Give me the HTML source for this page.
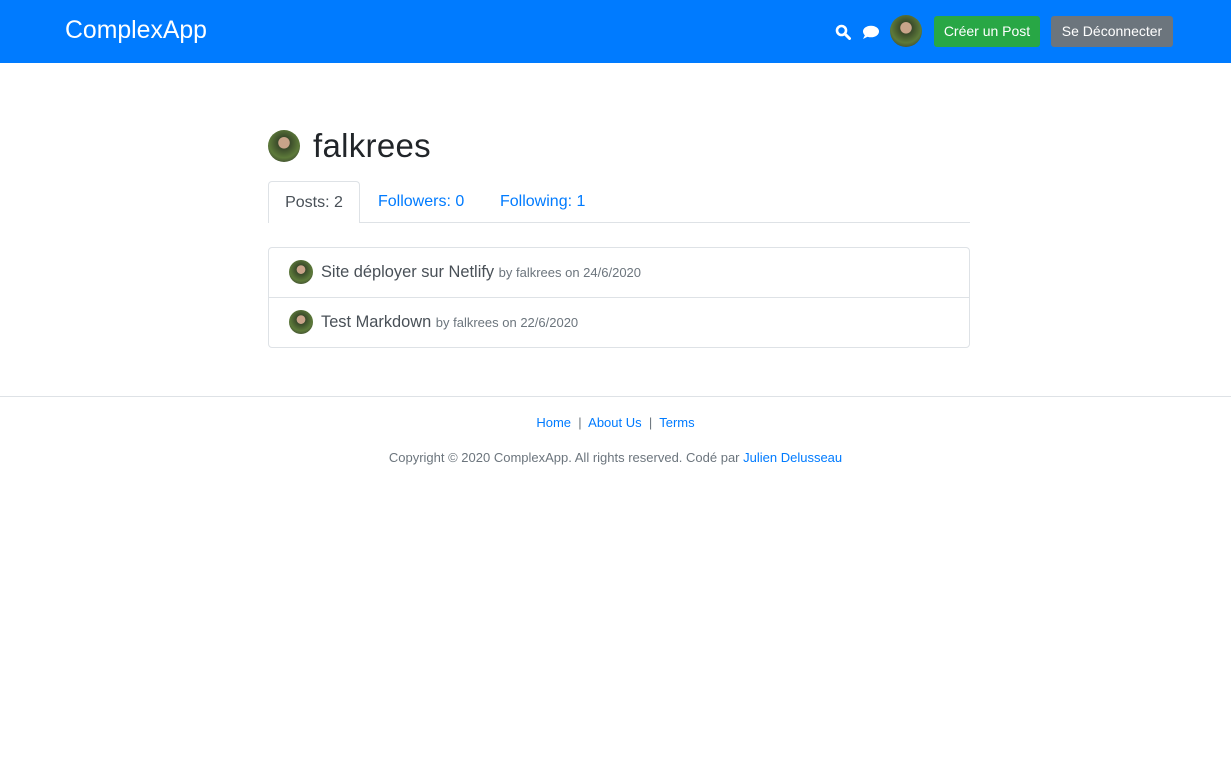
<!DOCTYPE html>
<html><head><meta charset="utf-8"><style>
*{box-sizing:border-box;margin:0;padding:0}
body{width:1231px;height:776px;background:#fff;font-family:"Liberation Sans",sans-serif;color:#212529;position:relative;overflow:hidden}
.hdr{position:absolute;left:0;top:0;width:1231px;height:63px;background:#007bff}
.logo{position:absolute;left:65px;top:17px;color:#fff;font-size:24.8px}
.av{display:inline-block;border-radius:50%;background:radial-gradient(circle at 50% 40%,#c9a48a 0 22%,#3a4a2a 24%,#5d7a3a 60%,#2a2a2a 100%)}
.btn{position:absolute;top:16px;height:31px;border-radius:3px;color:#fff;font-size:14px;line-height:31px;text-align:center}
a{color:#007bff;text-decoration:none}
</style></head><body>
<div class="hdr">
<div class="logo">ComplexApp</div>
<svg style="position:absolute;left:835px;top:24px" width="16" height="16" viewBox="0 0 16 16"><circle cx="6.5" cy="6.5" r="4.5" fill="none" stroke="#fff" stroke-width="2.6"/><path d="M10 10l4.5 4.5" stroke="#fff" stroke-width="3" stroke-linecap="round"/></svg>
<svg style="position:absolute;left:862px;top:25px" width="18" height="15" viewBox="0 0 18 15"><ellipse cx="9" cy="6.5" rx="8" ry="5.8" fill="#fff"/><path d="M3 10 L1 14 L7 11Z" fill="#fff"/></svg>
<span class="av" style="position:absolute;left:890px;top:15px;width:32px;height:32px"></span>
<div class="btn" style="left:934px;width:106px;background:#28a745">Créer un Post</div>
<div class="btn" style="left:1051px;width:122px;background:#6c757d">Se Déconnecter</div>
</div>
<span class="av" style="position:absolute;left:268px;top:130px;width:32px;height:32px"></span>
<div style="position:absolute;left:313px;top:127px;font-size:33px;letter-spacing:0.3px">falkrees</div>
<div style="position:absolute;left:268px;top:222px;width:702px;border-top:1px solid #dee2e6"></div>
<div style="position:absolute;left:268px;top:181px;width:92px;height:42px;border:1px solid #dee2e6;border-bottom:none;border-radius:4px 4px 0 0;background:#fff;color:#495057;font-size:16px;text-align:center;line-height:41px">Posts: 2</div>
<a style="position:absolute;left:378px;top:193px;font-size:16px">Followers: 0</a>
<a style="position:absolute;left:500px;top:193px;font-size:16px">Following: 1</a>
<div style="position:absolute;left:268px;top:247px;width:702px;height:101px;border:1px solid #dee2e6;border-radius:4px"></div>
<div style="position:absolute;left:269px;top:297px;width:700px;border-top:1px solid #dee2e6"></div>
<span class="av" style="position:absolute;left:289px;top:260px;width:24px;height:24px"></span>
<div style="position:absolute;left:321px;top:263px;font-size:16.4px;color:#495057">Site déployer sur Netlify <span style="font-size:13px;color:#6c757d">by falkrees on 24/6/2020</span></div>
<span class="av" style="position:absolute;left:289px;top:310px;width:24px;height:24px"></span>
<div style="position:absolute;left:321px;top:313px;font-size:16.4px;color:#495057">Test Markdown <span style="font-size:13px;color:#6c757d">by falkrees on 22/6/2020</span></div>
<div style="position:absolute;left:0;top:396px;width:1231px;border-top:1px solid #dee2e6"></div>
<div style="position:absolute;left:0;top:415px;width:1231px;text-align:center;font-size:13px;color:#6c757d"><a>Home</a> &nbsp;|&nbsp; <a>About Us</a> &nbsp;|&nbsp; <a>Terms</a></div>
<div style="position:absolute;left:0;top:450px;width:1231px;text-align:center;font-size:13px;color:#6c757d">Copyright © 2020 ComplexApp. All rights reserved. Codé par <a>Julien Delusseau</a></div>
</body></html>
